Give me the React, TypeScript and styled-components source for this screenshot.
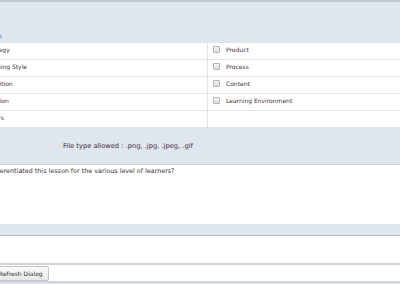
import React from "react";
import styled, { createGlobalStyle } from "styled-components";

const Global = createGlobalStyle`
  html, body { margin: 0; padding: 0; background: #ffffff; overflow: hidden; }
  body { font-family: "DejaVu Sans", Verdana, sans-serif; }
`;

const Frame = styled.div`
  margin-left: -58px;
  width: 540px;
  height: 284px;
  display: flex;
  flex-direction: column;
  font-size: 6px;
  color: #3f2f40;
`;

const HeaderPanel = styled.div`
  height: 42px;
  box-sizing: border-box;
  border-top: 2px solid #c2c8d0;
  background: #dfe6ee;
  display: flex;
  align-items: flex-end;
  padding-bottom: 3px;
`;

const LabelSlot = styled.div`
  width: 60px;
  flex: none;
  display: flex;
  justify-content: flex-end;
`;

const SectionLabel = styled.span`
  color: #3c72b4;
  font-weight: bold;
  white-space: nowrap;
`;

const OptionTable = styled.div`
  display: grid;
  grid-template-columns: 265px 1fr;
  border-top: 1px solid #e4e4e4;
`;

const Cell = styled.div<{ $divider?: boolean }>`
  height: 17px;
  box-sizing: border-box;
  padding-top: 2px;
  border-bottom: 1px solid #e4e4e4;
  border-left: ${(p) => (p.$divider ? "1px solid #e4e4e4" : "none")};
  padding-left: ${(p) => (p.$divider ? "5px" : "42px")};
`;

const CellLine = styled.div`
  height: 8px;
  display: flex;
  align-items: center;
  gap: 6px;
  white-space: nowrap;
`;

const Box = styled.span`
  width: 7px;
  height: 7px;
  box-sizing: border-box;
  border: 1px solid #b4b4b4;
  border-radius: 1px;
  background: linear-gradient(#f4f4f4, #dedede);
`;

const UploadPanel = styled.div`
  height: 37px;
  box-sizing: border-box;
  background: #dfe6ee;
  border-bottom: 1px solid #c8ced6;
  display: flex;
  align-items: center;
  padding-left: 121px;
  font-size: 6.7px;
  white-space: nowrap;
`;

const QuestionArea = styled.div`
  height: 59px;
  padding-top: 2px;
  box-sizing: border-box;
  font-size: 6.4px;
  color: #3a3040;
  white-space: nowrap;
`;

const Band = styled.div`
  height: 12px;
  background: #dfe6ee;
  border-bottom: 1px solid #b6bbc3;
  box-sizing: border-box;
`;

const Blank = styled.div`
  height: 29px;
  border-bottom: 2px solid #d8d0cc;
  box-sizing: border-box;
`;

const ButtonBar = styled.div`
  height: 18px;
  display: flex;
  align-items: center;
  padding-left: 51px;
  border-bottom: 2px solid #d2d6dc;
  box-sizing: border-box;
`;

const Button = styled.button`
  height: 15px;
  padding: 0 5px;
  font-family: "DejaVu Sans", Verdana, sans-serif;
  font-size: 6px;
  color: #333333;
  background: linear-gradient(#fafafa, #e8e8e8);
  border: 1px solid #c4c4c4;
  border-radius: 2px;
`;

const Foot = styled.div`
  flex: 1;
  background: #dfe6ee;
`;

const rows: [string, string][] = [
  ["Strategy", "Product"],
  ["Learning Style", "Process"],
  ["Cognition", "Content"],
  ["Emotion", "Learning Environment"],
  ["Others", ""],
];

export default function App() {
  return (
    <>
      <Global />
      <Frame>
        <HeaderPanel>
          <LabelSlot>
            <SectionLabel>Differentiated By :</SectionLabel>
          </LabelSlot>
        </HeaderPanel>
        <OptionTable>
          {rows.map(([l, r]) => (
            <React.Fragment key={l}>
              <Cell>
                <CellLine>{l}</CellLine>
              </Cell>
              <Cell $divider>
                <CellLine>
                  {r && <Box />}
                  {r}
                </CellLine>
              </Cell>
            </React.Fragment>
          ))}
        </OptionTable>
        <UploadPanel>File type allowed : .png, .jpg, .jpeg, .gif</UploadPanel>
        <QuestionArea>How have you differentiated this lesson for the various level of learners?</QuestionArea>
        <Band />
        <Blank />
        <ButtonBar>
          <Button>Refresh Dialog</Button>
        </ButtonBar>
        <Foot />
      </Frame>
    </>
  );
}
